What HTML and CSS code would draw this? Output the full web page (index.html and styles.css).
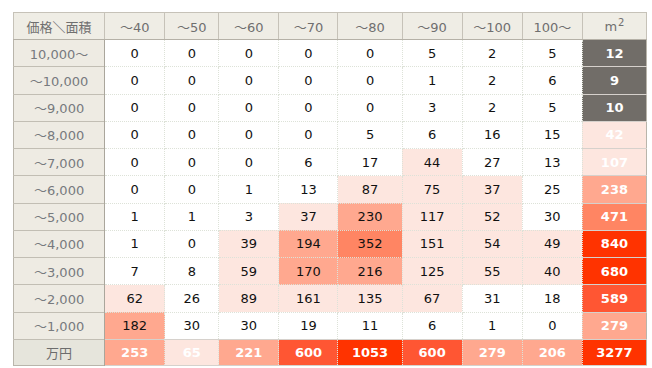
FILE: index.html
```html
<!DOCTYPE html>
<html lang="ja">
<head>
<meta charset="utf-8">
<title>価格＼面積</title>
<link rel="stylesheet" href="styles.css">
</head>
<body>
<table class="grid">
<colgroup>
<col class="w-label"><col class="w60"><col class="w54"><col class="w60"><col class="w59"><col class="w65"><col class="w60"><col class="w60"><col class="w60"><col class="w65">
</colgroup>
<thead>
<tr class="head">
<th>価格＼面積</th><th>～40</th><th>～50</th><th>～60</th><th>～70</th><th>～80</th><th>～90</th><th>～100</th><th>100～</th><th class="last">m<span class="sq">2</span></th>
</tr>
</thead>
<tbody>
<tr><th>10,000～</th><td>0</td><td>0</td><td>0</td><td>0</td><td>0</td><td>5</td><td>2</td><td>5</td><td class="sum g">12</td></tr>
<tr><th>～10,000</th><td>0</td><td>0</td><td>0</td><td>0</td><td>0</td><td>1</td><td>2</td><td>6</td><td class="sum g">9</td></tr>
<tr><th>～9,000</th><td>0</td><td>0</td><td>0</td><td>0</td><td>0</td><td>3</td><td>2</td><td>5</td><td class="sum g">10</td></tr>
<tr><th>～8,000</th><td>0</td><td>0</td><td>0</td><td>0</td><td>5</td><td>6</td><td>16</td><td>15</td><td class="sum p1">42</td></tr>
<tr><th>～7,000</th><td>0</td><td>0</td><td>0</td><td>6</td><td>17</td><td class="p1">44</td><td>27</td><td>13</td><td class="sum p1">107</td></tr>
<tr><th>～6,000</th><td>0</td><td>0</td><td>1</td><td>13</td><td class="p1">87</td><td class="p1">75</td><td class="p1">37</td><td>25</td><td class="sum p2">238</td></tr>
<tr><th>～5,000</th><td>1</td><td>1</td><td>3</td><td class="p1">37</td><td class="p2">230</td><td class="p1">117</td><td class="p1">52</td><td>30</td><td class="sum p3">471</td></tr>
<tr><th>～4,000</th><td>1</td><td>0</td><td class="p1">39</td><td class="p2">194</td><td class="p3">352</td><td class="p1">151</td><td class="p1">54</td><td class="p1">49</td><td class="sum p5">840</td></tr>
<tr><th>～3,000</th><td>7</td><td>8</td><td class="p1">59</td><td class="p2">170</td><td class="p2">216</td><td class="p1">125</td><td class="p1">55</td><td class="p1">40</td><td class="sum p5">680</td></tr>
<tr><th>～2,000</th><td class="p1">62</td><td>26</td><td class="p1">89</td><td class="p1">161</td><td class="p1">135</td><td class="p1">67</td><td>31</td><td>18</td><td class="sum p4">589</td></tr>
<tr><th>～1,000</th><td class="p2">182</td><td>30</td><td>30</td><td>19</td><td>11</td><td>6</td><td>1</td><td>0</td><td class="sum p2">279</td></tr>
<tr class="total"><th>万円</th><td class="sum p2">253</td><td class="sum p1">65</td><td class="sum p2">221</td><td class="sum p4">600</td><td class="sum p5">1053</td><td class="sum p4">600</td><td class="sum p2">279</td><td class="sum p2">206</td><td class="sum p5">3277</td></tr>
</tbody>
</table>
</body>
</html>
```

FILE: styles.css
```css
html, body {
  margin: 0;
  padding: 0;
  background: #ffffff;
}

body {
  padding: 12px 0 0 13px;
  font-family: "DejaVu Sans", "Noto Sans CJK JP", sans-serif;
  font-size: 13px;
}

.grid {
  border-collapse: collapse;
  table-layout: fixed;
  width: 634px;
  border: 1px solid #b9b5ab;
}

.w-label { width: 91px; }
.w60 { width: 60px; }
.w54 { width: 54px; }
.w59 { width: 59px; }
.w65 { width: 64px; }

.grid th,
.grid td {
  padding: 0;
  text-align: center;
  vertical-align: middle;
  white-space: nowrap;
  font-weight: normal;
}

.head {
  height: 27px;
}

.head th {
  background: #efede5;
  color: #6f6f6f;
  border: 1px solid #c6c2b8;
  border-bottom-color: #b5b1a7;
}

.sq {
  font-size: 10px;
  position: relative;
  top: -5px;
  margin-left: 1px;
}

tbody tr {
  height: 27.25px;
}

tbody th {
  background: #eeebe3;
  color: #777a7e;
  border-top: 1px solid #c2beb4;
  border-right: 1px solid #aaa69c;
}

tbody td {
  color: #111111;
  border: 1px dotted #dde2d8;
}

.grid tr.total {
  height: 26px;
}

.total th {
  background: #e6e5dc;
  color: #6c6c6c;
}

.total td {
  border-top: 1px solid #ece3dd;
}

.p1 { background: #fde6df; }
.p2 { background: #ffa88f; }
.p3 { background: #ff8563; }
.p4 { background: #ff5633; }
.p5 { background: #ff3300; }
.g  { background: #716d68; }

.grid td.sum {
  color: #ffffff;
  font-weight: bold;
  border-top: 1px solid #d6d1cc;
  border-bottom: 1px solid #d6d1cc;
}
```
